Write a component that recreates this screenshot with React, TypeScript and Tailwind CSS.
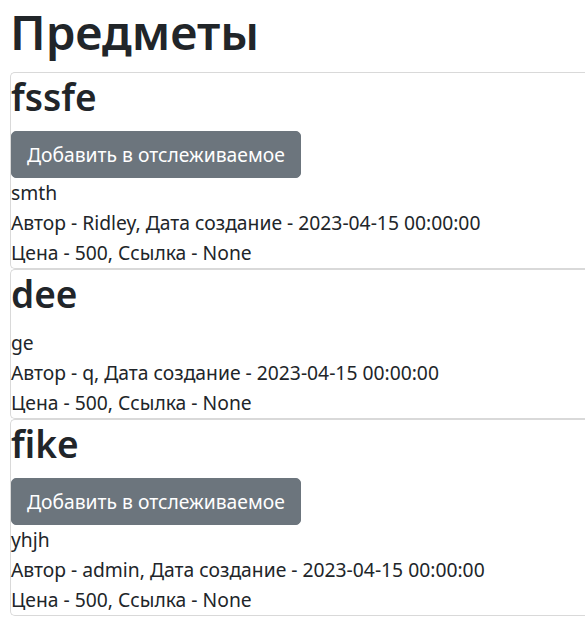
import React from 'react';

const items = [
  { title: 'fssfe', canTrack: true, text: 'smth', author: 'Ridley' },
  { title: 'dee', canTrack: false, text: 'ge', author: 'q' },
  { title: 'fike', canTrack: true, text: 'yhjh', author: 'admin' },
];

export default function App() {
  return (
    <div
      className="min-h-screen bg-white pl-[10px] pt-[2px] text-[#212529] text-[19.3px] leading-[30px] overflow-hidden"
      style={{ fontFamily: '"Noto Sans", "Open Sans", sans-serif' }}
    >
      <h1 className="text-[47.5px] leading-[60px] font-semibold mb-[10px]">Предметы</h1>

      {items.map((item, i) => (
        <div
          key={i}
          className="border border-r-0 border-[#d9d9d9] rounded-l-[5px] bg-white"
        >
          <h2 className="text-[37px] leading-[48px] font-semibold mb-[10px]">{item.title}</h2>
          {item.canTrack && (
            <button className="bg-[#6c757d] text-white text-[19.3px] leading-[30px] px-[15px] py-[7.5px] border border-[#6c757d] rounded-[5px]">
              Добавить в отслеживаемое
            </button>
          )}
          <div>{item.text}</div>
          <div>Автор - {item.author}, Дата создание - 2023-04-15 00:00:00</div>
          <div>Цена - 500, Ссылка - None</div>
        </div>
      ))}
    </div>
  );
}
